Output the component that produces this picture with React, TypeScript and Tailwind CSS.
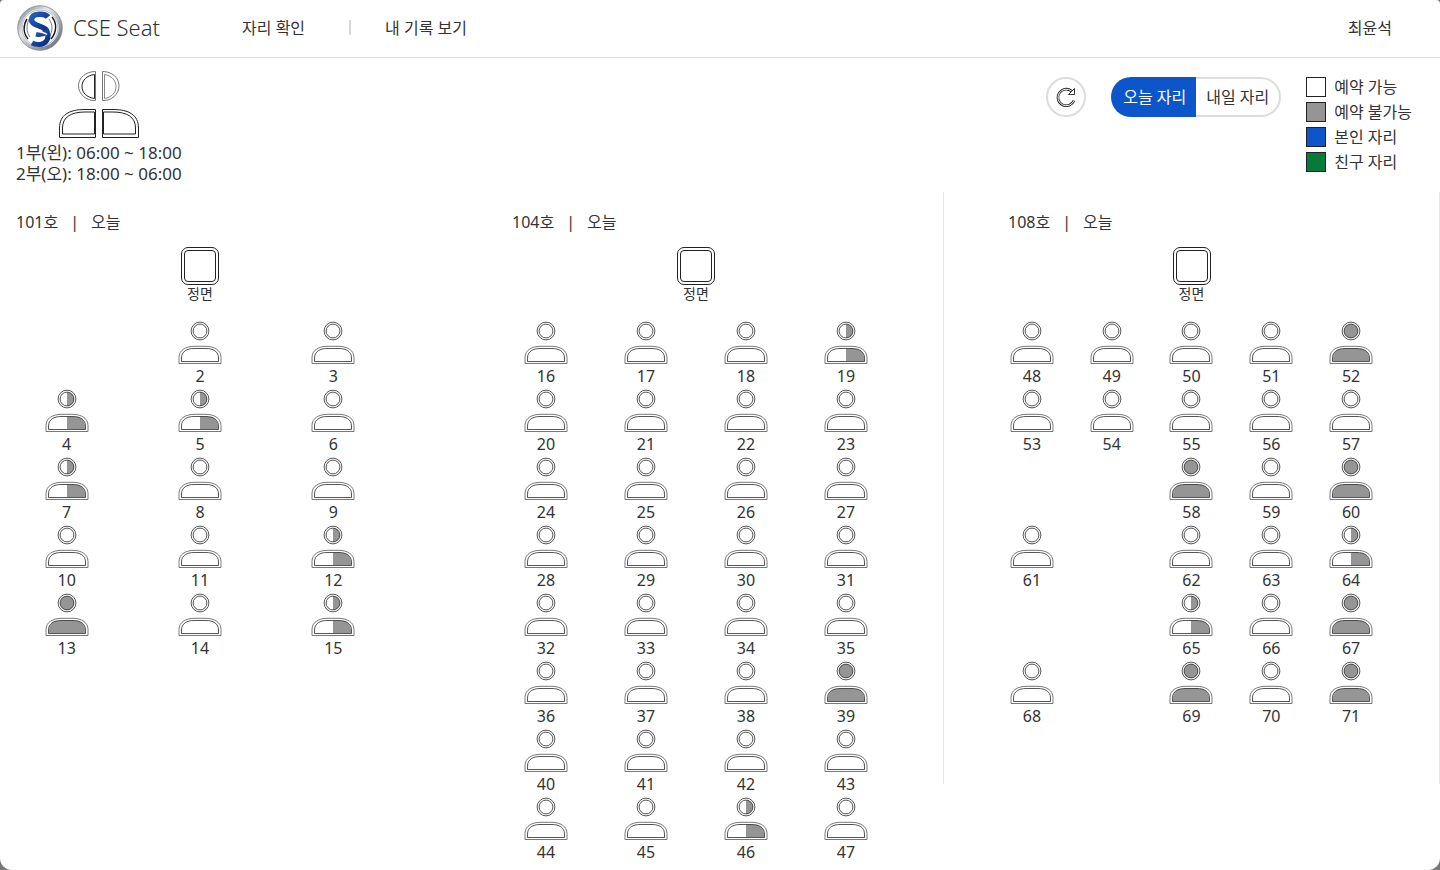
import { useState } from "react";

type Status = "free" | "second" | "full";

interface Room {
  name: string;
  grid: string;
  frame: string;
  rows: (number | null)[][];
}

const SECOND_TAKEN = [4, 5, 7, 12, 15, 19, 46, 64, 65];
const FULL = [13, 39, 52, 58, 60, 67, 69, 71];

const ROOMS: Room[] = [
  {
    name: "101호",
    grid: "grid-cols-3",
    frame: "pr-12",
    rows: [
      [null, 2, 3],
      [4, 5, 6],
      [7, 8, 9],
      [10, 11, 12],
      [13, 14, 15],
    ],
  },
  {
    name: "104호",
    grid: "grid-cols-4",
    frame: "px-12",
    rows: [
      [16, 17, 18, 19],
      [20, 21, 22, 23],
      [24, 25, 26, 27],
      [28, 29, 30, 31],
      [32, 33, 34, 35],
      [36, 37, 38, 39],
      [40, 41, 42, 43],
      [44, 45, 46, 47],
    ],
  },
  {
    name: "108호",
    grid: "grid-cols-5",
    frame: "-ml-px border-x border-[#e8e8e8] px-12 pb-14",
    rows: [
      [48, 49, 50, 51, 52],
      [53, 54, 55, 56, 57],
      [null, null, 58, 59, 60],
      [61, null, 62, 63, 64],
      [null, null, 65, 66, 67],
      [68, null, 69, 70, 71],
    ],
  },
];

const LEGEND = [
  { label: "예약 가능", swatch: "bg-white" },
  { label: "예약 불가능", swatch: "bg-[#959595]" },
  { label: "본인 자리", swatch: "bg-[#0d56c9]" },
  { label: "친구 자리", swatch: "bg-[#067a38]" },
];

function statusOf(seat: number): Status {
  if (FULL.includes(seat)) return "full";
  return SECOND_TAKEN.includes(seat) ? "second" : "free";
}

function SeatIcon({ status }: { status: Status }) {
  const left = status === "full" ? "#959595" : "#ffffff";
  const right = status === "free" ? "#ffffff" : "#959595";
  return (
    <svg className="h-11 w-11" viewBox="0 0 44 44" fill="none" aria-hidden="true">
      <path d="M22 4a7 7 0 0 0 0 14z" fill={left} />
      <path d="M22 4a7 7 0 0 1 0 14z" fill={right} />
      <path d="M22 28.500h-6C9 28.500 4 31.500 4 38V41H22z" fill={left} />
      <path d="M22 28.500h6C35 28.500 40 31.500 40 38V41H22z" fill={right} />
      <g stroke="#2b2b2b" strokeWidth="0.8">
        <circle cx="22" cy="11" r="8.900" />
        <circle cx="22" cy="11" r="6.900" />
        <path d="M1 43.500V37.500C1 30 8 26.500 16 26.300h12c8 .2 15 3.700 15 11.200v6z" stroke="#555555" />
        <path d="M3.500 41.500V38C3.500 31.500 9 28.500 16 28.500h12c7 0 12.500 3 12.500 9.500v3.500z" />
      </g>
    </svg>
  );
}

function SplitSeatIcon() {
  return (
    <svg className="ml-[42px] h-[68px] w-[82px]" viewBox="0 0 82 68" fill="none" stroke="#222222" aria-hidden="true">
      <path d="M37.500 1.500v29C28 31 20.500 24 20.500 15.800S28 1.500 37.500 1.500z" stroke="#777777" />
      <path d="M36.500 4.500v24C29 27.500 24 23 24 16.500S29 5.500 36.500 4.500z" />
      <path d="M44.500 1.500v29C54 31 61 24 61 15.800S54 1.500 44.500 1.500z" stroke="#777777" />
      <path d="M46.500 4.500v24C53 27.500 58 23 58 16.500S53 5.500 46.500 4.500z" stroke="#888888" />
      <path d="M37.500 39.500v28H1.500V58C1.500 45 11 39.500 27 39.500z" />
      <path d="M36.500 42v22H4.500V58C4.500 47 13 42 27 42z" />
      <path d="M44.500 39.500v28H80.500V58C80.500 45 71 39.500 55 39.500z" />
      <path d="M45.500 42v22H77.500V58C77.500 47 69 42 55 42z" />
    </svg>
  );
}

function Logo() {
  return (
    <svg className="h-[46px] w-[46px]" viewBox="0 0 46 46" fill="none" aria-hidden="true">
      <defs>
        <linearGradient id="rim" x1="0" y1="0" x2="1" y2="1">
          <stop offset="0" stopColor="#7c828c" />
          <stop offset="0.35" stopColor="#e4e7ea" />
          <stop offset="0.65" stopColor="#a5aab1" />
          <stop offset="1" stopColor="#5d646f" />
        </linearGradient>
        <linearGradient id="letter" x1="0" y1="0" x2="1" y2="1">
          <stop offset="0" stopColor="#2460b4" />
          <stop offset="1" stopColor="#062b82" />
        </linearGradient>
      </defs>
      <circle cx="23" cy="23" r="20.500" fill="#ffffff" stroke="url(#rim)" strokeWidth="3.500" />
      <circle cx="23" cy="23" r="22.300" stroke="#7d838c" strokeWidth="0.8" />
      <circle cx="23" cy="23" r="18" stroke="#a0a5ab" strokeWidth="0.8" />
      <path d="M10 14c-4 6-4 14 1 20M35 12c5 6 5 15-1 22" stroke="#16191f" strokeWidth="1.400" />
      <path d="M13 13c-4 6-4 14 0 19M32 14c4 6 4 12 0 18" stroke="#555b64" strokeWidth="0.800" />
      <path d="M31 12C28 8 15 8 14.500 14.500c-.5 7 15.500 6 15.500 13" stroke="url(#letter)" strokeWidth="5.500" />
      <path d="M19 29c4 1 8 0 11-2 3 6-1 12-7 12.500-4 .3-6-.5-8-1.500" stroke="url(#letter)" strokeWidth="5" />
      <path d="M17 26c6 1 10 1 13 3.500" stroke="#ffffff" strokeWidth="1.400" />
      <path d="M16 32c4 3 8 3 12 1" stroke="#ffffff" strokeWidth="1" />
    </svg>
  );
}

function RefreshIcon() {
  return (
    <svg className="h-5 w-5" viewBox="0 0 20 20" fill="none" stroke="#222222" aria-hidden="true">
      <path d="M18 13.500A8.300 8.300 0 1 1 15.500 4" strokeWidth="2.600" />
      <path d="M18 13.500A8.300 8.300 0 1 1 15.500 4" stroke="#ffffff" strokeWidth="1" />
      <path d="M18.500 1.500v6h-6z" fill="#ffffff" strokeWidth="0.900" strokeLinejoin="round" />
    </svg>
  );
}

function RoomSection({ room, day }: { room: Room; day: string }) {
  return (
    <section className={`self-start pt-5 ${room.frame}`}>
      <h2 className="flex gap-3 pl-4 leading-5">
        <span>{room.name}</span>
        <span>|</span>
        <span>{day}</span>
      </h2>
      <div className="mt-3.5 flex flex-col items-center text-sm leading-4">
        <svg className="h-10 w-10" viewBox="0 0 40 40" fill="none" stroke="#222222" aria-hidden="true">
          <rect x="1.500" y="1.500" width="37" height="37" rx="6.500" />
          <rect x="4.500" y="4.500" width="31" height="31" rx="3.500" />
        </svg>
        정면
      </div>
      <div className={`mt-[18px] grid ${room.grid}`}>
        {room.rows.flat().map((seat, i) =>
          seat === null ? (
            <span key={`empty-${i}`} />
          ) : (
            <button key={seat} type="button" className="flex flex-col items-center leading-6">
              <SeatIcon status={statusOf(seat)} />
              {seat}
            </button>
          ),
        )}
      </div>
    </section>
  );
}

export default function App() {
  const [day, setDay] = useState("오늘");

  return (
    <div className="bg-[#777777]">
      <div className="flex min-h-screen flex-col rounded-t-sm rounded-b-xl bg-white font-['Noto_Sans','Noto_Sans_CJK_KR',sans-serif] text-base text-[#333333]">
        <header className="flex h-[58px] items-center border-b border-[#dddddd] pr-12 pl-[17px] pb-0.5">
          <a href="#home" className="flex items-center gap-2.5 text-[22px] font-light">
            <Logo />
            CSE Seat
          </a>
          <nav className="ml-[82px] flex items-center">
            <a href="#seats">자리 확인</a>
            <span className="mr-[34px] ml-11 h-[15px] w-0.5 bg-[#d8d8d8]" />
            <a href="#history">내 기록 보기</a>
          </nav>
          <a href="#me" className="ml-auto">최윤석</a>
        </header>

        <div className="flex items-start justify-between pt-3">
          <div className="pl-4">
            <SplitSeatIcon />
            <p className="mt-1 text-[17px] leading-[21px]">1부(왼): 06:00 ~ 18:00</p>
            <p className="text-[17px] leading-[21px]">2부(오): 18:00 ~ 06:00</p>
          </div>
          <div className="flex items-start pt-1 pr-7">
            <button
              type="button"
              aria-label="새로고침"
              className="mt-[3px] flex h-10 w-10 items-center justify-center rounded-full border-2 border-[#dddddd]"
            >
              <RefreshIcon />
            </button>
            <div className="mt-[3px] ml-[25px] flex h-10 w-[170px]">
              {["오늘", "내일"].map((d) => (
                <button
                  key={d}
                  type="button"
                  aria-pressed={d === day}
                  onClick={() => setDay(d)}
                  className={`flex-1 border-2 first:rounded-l-[20px] first:border-r-0 last:rounded-r-[20px] last:border-l-0 ${
                    d === day ? "border-[#0d56c9] bg-[#0d56c9] text-white" : "border-[#dddddd]"
                  }`}
                >
                  {d} 자리
                </button>
              ))}
            </div>
            <ul className="ml-[25px]">
              {LEGEND.map((item) => (
                <li key={item.label} className="flex h-[25px] items-center gap-2">
                  <span className={`h-5 w-5 border border-[#222222] ${item.swatch}`} />
                  {item.label}
                </li>
              ))}
            </ul>
          </div>
        </div>

        <main className="mt-2 grid grid-cols-[448fr_496fr_496fr]">
          {ROOMS.map((room) => (
            <RoomSection key={room.name} room={room} day={day} />
          ))}
        </main>
      </div>
    </div>
  );
}
